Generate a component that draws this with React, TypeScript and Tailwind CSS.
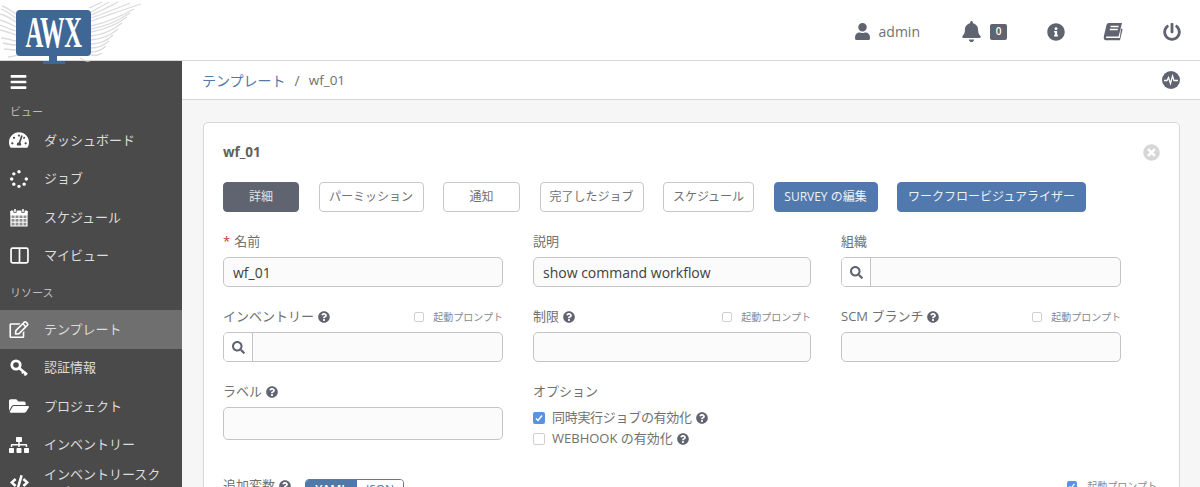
import React from 'react';
import {
  FaBars, FaBell, FaCode, FaFolderOpen, FaInfoCircle, FaPowerOff, FaQuestionCircle,
  FaRegEdit, FaSearch, FaSitemap, FaSpinner, FaTachometerAlt, FaTimesCircle, FaUser,
} from 'react-icons/fa';

const ColumnsIcon = ({ className }: { className?: string }) => (
  <svg viewBox="0 0 18 16" className={className} fill="none" stroke="currentColor" strokeWidth="1.6">
    <rect x="1" y="1" width="16" height="14" rx="1.5" />
    <path d="M9 1v14" />
  </svg>
);

const CalendarIcon = () => (
  <svg viewBox="0 0 18 19" className="h-[19px] w-[18px]" fill="none" stroke="currentColor">
    <path d="M1 3.500h16v14.500H1z" fill="#8f8f8f" strokeWidth="1.200" />
    <path d="M1 3h16v4H1z" fill="currentColor" strokeWidth="1" />
    <path d="M1 10.500h16M1 14.200h16M5 7v11M9 7v11M13 7v11" strokeWidth="1" />
    <path d="M5 .8v4M13 .8v4" stroke="#4a4a4a" strokeWidth="3.200" />
    <path d="M5 1v3M13 1v3" strokeWidth="1.600" />
  </svg>
);

const KeyIcon = () => (
  <svg viewBox="0 0 19 18" className="h-[18px] w-[19px]" fill="none" stroke="currentColor">
    <circle cx="6" cy="6" r="4.200" strokeWidth="2.800" />
    <path d="M9 9l8 6.500" strokeWidth="2.600" />
    <path d="M13.500 12.500l-1.500 2M16 14.500l-1.500 2" strokeWidth="2" />
  </svg>
);

const BookIcon = () => (
  <svg viewBox="0 0 20 18" className="h-[18px] w-[20px] text-[#606470]" fill="currentColor">
    <path d="M6 0h13l-3.400 13.400H3.800c-1 0-1.400 1.600-.2 1.600h13.200L18 5.500l1.600.8-2.600 11H3C.9 17.300.4 15 .9 13L3.500 2C3.800.8 4.800 0 6 0z" />
    <path d="M7.600 3.500h8M6.800 6.500h8" stroke="#fff" strokeWidth="1.400" />
  </svg>
);

const PulseIcon = () => (
  <svg viewBox="0 0 18 18" className="h-[18px] w-[18px]">
    <circle cx="9" cy="9" r="9" fill="#606470" />
    <path d="M2 9.500h3l1.500-3 2 6 2-7.500 1.500 4.500h4" fill="none" stroke="#fff" strokeWidth="1.300" />
  </svg>
);

const feathersLeft = [
  'M16 14C10 10 6 7 2 6', 'M16 18C10 14 6 11 1 9', 'M16 22C10 18 5 15 0 14', 'M16 27C10 24 5 21 0 20', 'M16 31C10 29 5 27 0 25',
  'M16 35C10 33 5 31 0 30', 'M16 41C11 40 6 38 1 38', 'M16 45C11 45 7 44 3 43', 'M16 50C12 50 8 49 4 49', 'M18 55C14 56 11 57 8 57',
];
const feathersRight = [
  'M89 8C94 6 98 4 102 2', 'M91 12C97 9 103 5 109 2', 'M91 15C101 11 110 6 118 2', 'M91 18C102 14 116 9 130 3', 'M91 21C104 17 122 10 141 4',
  'M91 26C104 23 120 17 134 9', 'M91 29C104 27 118 21 130 13', 'M91 32C103 30 116 25 127 17', 'M91 36C102 35 113 30 122 23', 'M91 40C101 39 111 35 118 29',
  'M91 44C99 44 107 41 113 35', 'M91 48C97 48 103 46 109 41', 'M91 52C97 52 102 50 106 46', 'M91 55C95 56 98 56 102 53', 'M80 58C84 61 88 62 92 60',
];

const Logo = () => (
  <div className="absolute left-0 top-0 z-10 h-[64px] w-[142px]">
    <svg viewBox="0 0 142 64" className="absolute left-0 top-0 h-[64px] w-[142px]" fill="none" stroke="#dcdcdc" strokeWidth="1.300">
      {feathersLeft.map((d) => <path key={d} d={d} />)}
      {feathersRight.map((d) => <path key={d} d={d} />)}
    </svg>
    <div className="absolute left-[16px] top-[10px] flex h-[46px] w-[75px] items-center justify-center rounded-[4px] bg-[#3f6796]">
      <span className="flex w-[75px] justify-center whitespace-nowrap text-center font-['Liberation_Serif',serif] text-[44px] font-bold leading-none tracking-[-1px] text-white [transform:scaleX(0.56)]">
        AWX
      </span>
    </div>
    <div className="absolute left-[49px] top-[56px] h-[5px] w-[8px] bg-[#3f6796]" />
    <div className="absolute left-[43px] top-[61px] h-[3px] w-[22px] bg-[#3f6796]" />
  </div>
);

const navTop = [
  { label: 'ダッシュボード', icon: <FaTachometerAlt className="h-[18px] w-[20px]" /> },
  { label: 'ジョブ', icon: <FaSpinner className="h-[18px] w-[18px]" /> },
  { label: 'スケジュール', icon: <CalendarIcon /> },
  { label: 'マイビュー', icon: <ColumnsIcon className="h-[17px] w-[19px]" /> },
];

const navResources = [
  { label: 'テンプレート', icon: <FaRegEdit className="h-[17px] w-[20px]" />, active: true },
  { label: '認証情報', icon: <KeyIcon /> },
  { label: 'プロジェクト', icon: <FaFolderOpen className="h-[18px] w-[20px]" /> },
  { label: 'インベントリー', icon: <FaSitemap className="h-[18px] w-[20px]" /> },
];

const NavRow = ({ label, icon, active }: { label: string; icon: React.ReactNode; active?: boolean }) => (
  <div className={`flex h-[38.500px] items-center text-[13px] ${active ? 'bg-[#6f6f6f]' : ''}`}>
    <span className="flex w-[44px] shrink-0 justify-center pr-[6px] text-white">{icon}</span>
    <span>{label}</span>
  </div>
);

const Sidebar = () => (
  <aside className="h-full w-[182px] shrink-0 overflow-hidden bg-[#4a4a4a] text-[#dcdcdc]">
    <div className="flex h-[41px] items-center pl-[10px] text-white">
      <FaBars className="h-[18px] w-[17px]" />
    </div>
    <div className="flex h-[19px] items-center pl-[10px] pt-[2px] text-[11px] text-[#bdbdbd]">ビュー</div>
    {navTop.map((item) => <NavRow key={item.label} {...item} />)}
    <div className="flex h-[35px] items-center pl-[10px] pt-[1px] text-[11px] text-[#bdbdbd]">リソース</div>
    {navResources.map((item) => <NavRow key={item.label} {...item} />)}
    <div className="mt-[1px] flex items-start text-[13px] leading-[18px]">
      <span className="flex w-[44px] shrink-0 justify-center pr-[6px] pt-[10px] text-white">
        <FaCode className="h-[15px] w-[19px]" />
      </span>
      <span className="w-[120px]">インベントリースクリプト</span>
    </div>
  </aside>
);

const Header = () => (
  <header className="relative flex h-[61px] shrink-0 items-center justify-end border-b border-[#d7d7d7] bg-white pt-[3px] text-[#606470]">
    <Logo />
    <FaUser className="h-[17px] w-[15px]" />
    <span className="ml-[9px] text-[14px] text-[#707070]">admin</span>
    <FaBell className="ml-[42px] h-[21px] w-[19px]" />
    <span className="ml-[9px] flex h-[16px] w-[17px] items-center justify-center rounded-[2px] bg-[#606470] text-[10px] font-semibold text-white">0</span>
    <FaInfoCircle className="ml-[40px] h-[18px] w-[18px]" />
    <span className="ml-[38px] flex"><BookIcon /></span>
    <FaPowerOff className="ml-[40px] mr-[19px] h-[18px] w-[18px]" />
  </header>
);

const Help = () => <FaQuestionCircle className="ml-[4px] inline-block h-[12px] w-[12px] text-[#606470]" />;

const PromptCheck = () => (
  <span className="flex items-center text-[10px] text-[#848992]">
    <span className="mr-[9px] h-[10px] w-[10px] rounded-[2px] border border-[#d0d0d0] bg-white" />
    起動プロンプト
  </span>
);

const TextInput = ({ value, search, tall }: { value?: string; search?: boolean; tall?: boolean }) => (
  <div className={`flex overflow-hidden rounded-[5px] border border-[#c4c4c4] bg-[#fbfbfb] text-[14px] text-[#404040] ${tall ? 'h-[33px]' : 'h-[30px]'}`}>
    {search && (
      <span className="flex w-[29px] shrink-0 items-center justify-center border-r border-[#c4c4c4] bg-white text-[#606470]">
        <FaSearch className="h-[13px] w-[13px]" />
      </span>
    )}
    {value && <span className="flex items-center pl-[9px]">{value}</span>}
  </div>
);

const FieldLabel = ({ children, prompt }: { children: React.ReactNode; prompt?: boolean }) => (
  <div className="mb-[6px] flex h-[18px] items-center justify-between text-[13px] text-[#707070]">
    <span className="flex items-center">{children}</span>
    {prompt && <PromptCheck />}
  </div>
);

const tabs = [
  { label: '詳細', w: 'w-[76px]', style: 'bg-[#606470] text-[#e4e4e4] border-[#606470]' },
  { label: 'パーミッション', w: 'w-[105px]', style: 'bg-white text-[#707070] border-[#c8c8c8]' },
  { label: '通知', w: 'w-[77px]', style: 'bg-white text-[#707070] border-[#c8c8c8]' },
  { label: '完了したジョブ', w: 'w-[104px]', style: 'bg-white text-[#707070] border-[#c8c8c8]' },
  { label: 'スケジュール', w: 'w-[91px]', style: 'bg-white text-[#707070] border-[#c8c8c8]' },
  { label: 'SURVEY の編集', w: 'w-[104px]', style: 'bg-[#5279ad] text-[#eef2f7] border-[#5279ad]' },
  { label: 'ワークフロービジュアライザー', w: 'w-[189px]', style: 'bg-[#5279ad] text-[#eef2f7] border-[#5279ad]' },
];

const Form = () => (
  <div className="mt-[21px] grid grid-cols-[280px_278px_280px] gap-x-[30px] gap-y-[21px]">
    <div>
      <FieldLabel><span className="mr-[4px] text-[#c0392b]">*</span>名前</FieldLabel>
      <TextInput value="wf_01" />
    </div>
    <div>
      <FieldLabel>説明</FieldLabel>
      <TextInput value="show command workflow" />
    </div>
    <div>
      <FieldLabel>組織</FieldLabel>
      <TextInput search />
    </div>
    <div>
      <FieldLabel prompt>インベントリー<Help /></FieldLabel>
      <TextInput search />
    </div>
    <div>
      <FieldLabel prompt>制限<Help /></FieldLabel>
      <TextInput />
    </div>
    <div>
      <FieldLabel prompt>SCM ブランチ<Help /></FieldLabel>
      <TextInput />
    </div>
    <div>
      <FieldLabel>ラベル<Help /></FieldLabel>
      <TextInput tall />
    </div>
    <div>
      <FieldLabel>オプション</FieldLabel>
      <div className="flex h-[21px] items-center text-[13px] tracking-[-0.3px] text-[#707070]">
        <span className="mr-[7px] flex h-[12px] w-[12px] items-center justify-center rounded-[2px] bg-[#5b93e0]">
          <svg viewBox="0 0 12 12" className="h-[12px] w-[12px]" fill="none" stroke="#fff" strokeWidth="1.500">
            <path d="M3 6.500l2 2 4-5" />
          </svg>
        </span>
        同時実行ジョブの有効化<Help />
      </div>
      <div className="flex h-[21px] items-center text-[13px] text-[#707070]">
        <span className="mr-[7px] h-[12px] w-[12px] rounded-[2px] border border-[#d0d0d0] bg-white" />
        WEBHOOK の有効化<Help />
      </div>
    </div>
  </div>
);

const Main = () => (
  <main className="min-w-0 flex-1 bg-[#f6f6f6]">
    <div className="flex h-[39px] items-center justify-between border-b border-[#d7d7d7] bg-white pl-[20px] pr-[20px] text-[14px]">
      <div className="flex items-center">
        <span className="text-[#4f79a8]">テンプレート</span>
        <span className="mx-[9px] text-[#707070]">/</span>
        <span className="text-[13.500px] text-[#707070]">wf_01</span>
      </div>
      <PulseIcon />
    </div>
    <div className="pl-[21px] pr-[20px] pt-[22px]">
      <section className="relative rounded-[5px] border border-[#d7d7d7] bg-white px-[19px] pt-[19px]">
        <div className="flex h-[20px] items-center justify-between">
          <h1 className="text-[13.500px] font-bold text-[#606060]">wf_01</h1>
          <FaTimesCircle className="h-[17px] w-[17px] text-[#d7d7d7]" />
        </div>
        <div className="mt-[20px] flex gap-x-[19.500px]">
          {tabs.map((tab) => (
            <div key={tab.label} className={`flex h-[30px] items-center justify-center rounded-[4px] border text-[12px] ${tab.w} ${tab.style}`}>
              {tab.label}
            </div>
          ))}
        </div>
        <Form />
        <div className="mt-[28px] flex h-[40px] items-start justify-between text-[13px] text-[#707070]">
          <div className="flex items-start">
            <span className="flex h-[18px] w-[82px] items-center">追加変数<Help /></span>
            <div className="mt-[2px] flex h-[22px] w-[99px] overflow-hidden rounded-[4px] border border-[#4f79a8] text-[12px]">
              <span className="flex w-[51px] items-center justify-center bg-[#4f79a8] font-semibold text-white">YAML</span>
              <span className="flex flex-1 items-center justify-center bg-white text-[#4f79a8]">JSON</span>
            </div>
          </div>
          <span className="mr-[3px] flex h-[18px] items-center text-[10px] text-[#848992]">
            <span className="mr-[10px] flex h-[10px] w-[10px] items-center justify-center rounded-[2px] bg-[#5b93e0]">
              <svg viewBox="0 0 12 12" className="h-[10px] w-[10px]" fill="none" stroke="#fff" strokeWidth="1.500">
                <path d="M3 6.500l2 2 4-5" />
              </svg>
            </span>
            起動プロンプト
          </span>
        </div>
      </section>
    </div>
  </main>
);

export default function App() {
  return (
    <div className="flex h-[487px] w-[1200px] flex-col overflow-hidden bg-white font-['Open_Sans','Noto_Sans_CJK_JP',sans-serif]">
      <Header />
      <div className="flex min-h-0 flex-1">
        <Sidebar />
        <Main />
      </div>
    </div>
  );
}
